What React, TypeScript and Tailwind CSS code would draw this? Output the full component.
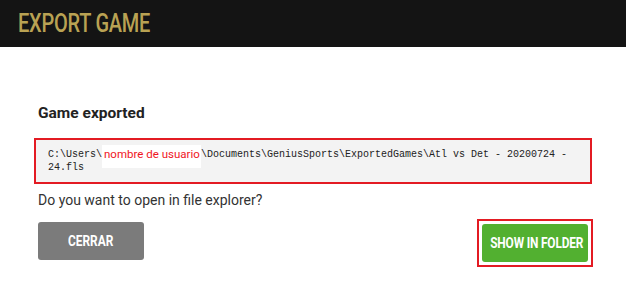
export default function App() {
  return (
    <div className="w-[626px] h-[299px] bg-white overflow-hidden" style={{ fontFamily: "Roboto, 'Liberation Sans', sans-serif" }}>
      {/* header */}
      <div className="h-[47px] bg-[#141414] flex items-center px-[18px]">
        <h1 className="inline-block origin-left scale-x-[0.8] whitespace-nowrap text-[25px] font-medium leading-none text-[#b9a253] tracking-[-0.3px]">
          EXPORT GAME
        </h1>
      </div>

      <div className="px-[34px] pt-[56px]">
        <p className="ml-1 text-[15.5px] leading-[20px] font-bold text-[#222]">Game exported</p>

        <div className="mt-[15px] border-2 border-[#e31b23] bg-[#f3f3f3] px-3 py-2 font-['Liberation_Mono',monospace] text-[10px] leading-[13px] text-[#222]">
          <div className="whitespace-nowrap">
            C:\Users\
            <span className="relative inline-block w-[99px] h-[13px] align-top">
              <span className="absolute left-0 right-0 -top-[3px] h-[23px] bg-white pl-[2px] font-['Roboto',sans-serif] text-[11.5px] leading-[18px] text-[#f0141e]">
                nombre de usuario
              </span>
            </span>
            \Documents\GeniusSports\ExportedGames\Atl vs Det - 20200724 -
          </div>
          <div>24.fls</div>
        </div>

        <p className="ml-1 mt-[6px] text-[14px] leading-[20px] text-[#333]">Do you want to open in file explorer?</p>

        <div className="mt-[9px] flex items-start justify-between">
          <button className="ml-1 mt-[3px] w-[106px] h-[38px] rounded-[3px] bg-[#7b7b7b] text-white text-[14px] font-bold">
            <span className="inline-block scale-x-[0.85] whitespace-nowrap">CERRAR</span>
          </button>
          <div className="-mr-[1px] border-2 border-[#e31b23] p-[3px]">
            <button className="w-[106px] h-[38px] rounded-[3px] bg-[#52b030] text-white text-[14px] font-bold">
              <span className="inline-block scale-x-[0.85] whitespace-nowrap tracking-[-0.2px]">SHOW IN FOLDER</span>
            </button>
          </div>
        </div>
      </div>
    </div>
  );
}
